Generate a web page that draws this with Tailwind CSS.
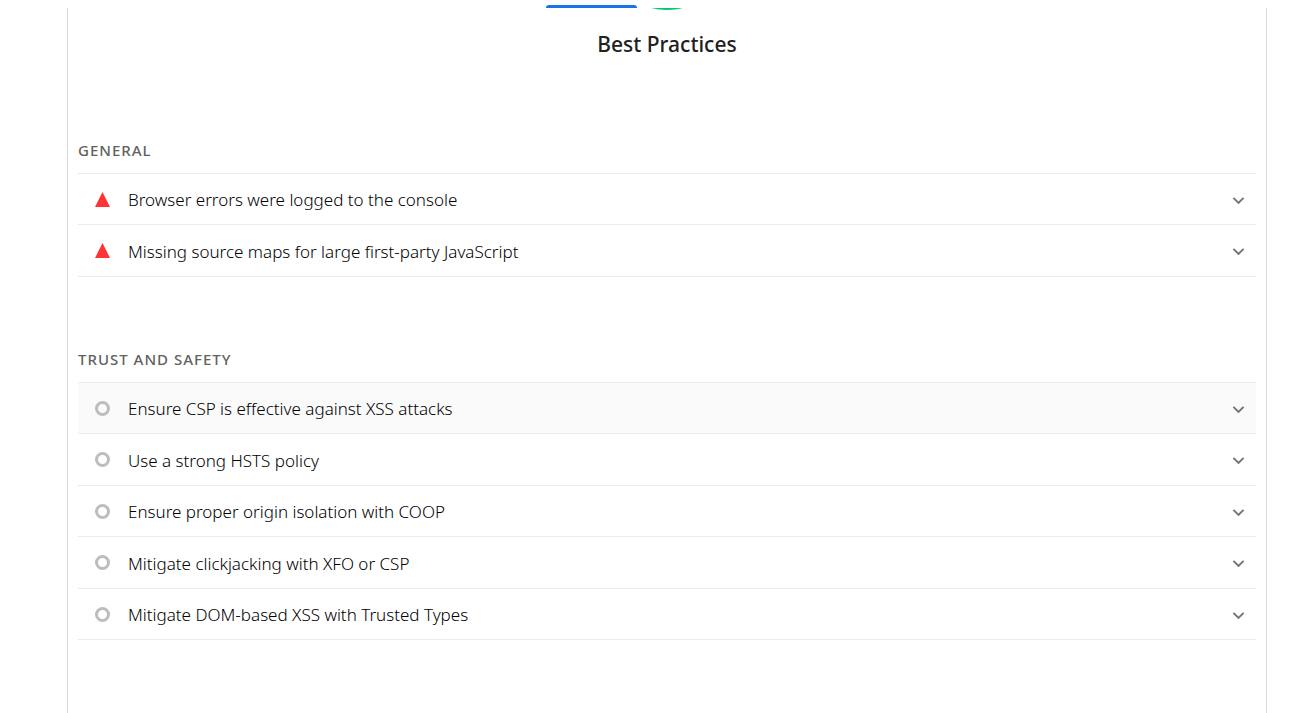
<!DOCTYPE html>
<html lang="en">
<head>
<meta charset="utf-8">
<meta name="viewport" content="width=device-width, initial-scale=1">
<title>Best Practices</title>
<script src="https://cdn.jsdelivr.net/npm/@tailwindcss/browser@4"></script>
</head>
<body class="flex min-h-screen flex-col bg-white font-['Segoe_UI','Noto_Sans',sans-serif] text-[#212121]">
<svg class="hidden" aria-hidden="true">
  <symbol id="fail" viewBox="0 0 15 15"><path d="M7.5 0 15 15H0z" fill="#f33"/></symbol>
  <symbol id="info" viewBox="0 0 15 15"><circle cx="7.5" cy="7.5" r="6" fill="none" stroke="#bdbdbd" stroke-width="3"/></symbol>
  <symbol id="chevron" viewBox="0 0 24 24"><path d="M16.59 8.59 12 13.17 7.41 8.59 6 10l6 6 6-6z" fill="#757575"/></symbol>
</svg>
<header class="flex h-2 items-end justify-center pr-[113px]">
  <div class="h-[3px] w-[91px] rounded-t-[3px] bg-[#1a73e8]"></div>
</header>
<main class="mr-[29px] ml-[67px] flex-1 border-x border-[#dadada] px-[10px]">
  <svg class="mx-auto block h-[2px] w-8" viewBox="0 0 32 2" aria-hidden="true"><path d="M0 0h32Q16 4 0 0z" fill="#0c6"/></svg>
  <h1 class="mt-[18px] text-center text-[21px] leading-8 font-medium">Best Practices</h1>

  <section class="mt-20">
    <h2 class="pb-[13px] text-[15px] leading-5 font-medium tracking-[1px] text-[#616161] uppercase">General</h2>
    <ul class="border-t border-[#ebebeb] text-[17px] leading-6 font-light text-black">
      <li class="group"><details><summary class="flex min-h-[51px] cursor-pointer list-none items-center border-b border-[#ebebeb] pr-[6px] pl-[17px] group-even:min-h-[52px]"><svg class="mr-[18px] size-[15px]"><use href="#fail"/></svg><span class="flex-1 pt-0.5">Browser errors were logged to the console</span><svg class="mt-0.5 size-[23px]"><use href="#chevron"/></svg></summary></details></li>
      <li class="group"><details><summary class="flex min-h-[51px] cursor-pointer list-none items-center border-b border-[#ebebeb] pr-[6px] pl-[17px] group-even:min-h-[52px]"><svg class="mr-[18px] size-[15px]"><use href="#fail"/></svg><span class="flex-1 pt-0.5">Missing source maps for large first-party JavaScript</span><svg class="mt-0.5 size-[23px]"><use href="#chevron"/></svg></summary></details></li>
    </ul>
  </section>

  <section class="mt-[72px]">
    <h2 class="pb-[13px] text-[15px] leading-5 font-medium tracking-[1px] text-[#616161] uppercase">Trust and Safety</h2>
    <ul class="border-t border-[#ebebeb] text-[17px] leading-6 font-light text-black">
      <li class="group"><details><summary class="flex min-h-[51px] cursor-pointer list-none items-center border-b border-[#ebebeb] bg-[#fafafa] pr-[6px] pl-[17px] group-even:min-h-[52px]"><svg class="mr-[18px] size-[15px]"><use href="#info"/></svg><span class="flex-1 pt-0.5">Ensure CSP is effective against XSS attacks</span><svg class="mt-0.5 size-[23px]"><use href="#chevron"/></svg></summary></details></li>
      <li class="group"><details><summary class="flex min-h-[51px] cursor-pointer list-none items-center border-b border-[#ebebeb] pr-[6px] pl-[17px] group-even:min-h-[52px]"><svg class="mr-[18px] size-[15px]"><use href="#info"/></svg><span class="flex-1 pt-0.5">Use a strong HSTS policy</span><svg class="mt-0.5 size-[23px]"><use href="#chevron"/></svg></summary></details></li>
      <li class="group"><details><summary class="flex min-h-[51px] cursor-pointer list-none items-center border-b border-[#ebebeb] pr-[6px] pl-[17px] group-even:min-h-[52px]"><svg class="mr-[18px] size-[15px]"><use href="#info"/></svg><span class="flex-1 pt-0.5">Ensure proper origin isolation with COOP</span><svg class="mt-0.5 size-[23px]"><use href="#chevron"/></svg></summary></details></li>
      <li class="group"><details><summary class="flex min-h-[51px] cursor-pointer list-none items-center border-b border-[#ebebeb] pr-[6px] pl-[17px] group-even:min-h-[52px]"><svg class="mr-[18px] size-[15px]"><use href="#info"/></svg><span class="flex-1 pt-0.5">Mitigate clickjacking with XFO or CSP</span><svg class="mt-0.5 size-[23px]"><use href="#chevron"/></svg></summary></details></li>
      <li class="group"><details><summary class="flex min-h-[51px] cursor-pointer list-none items-center border-b border-[#ebebeb] pr-[6px] pl-[17px] group-even:min-h-[52px]"><svg class="mr-[18px] size-[15px]"><use href="#info"/></svg><span class="flex-1 pt-0.5">Mitigate DOM-based XSS with Trusted Types</span><svg class="mt-0.5 size-[23px]"><use href="#chevron"/></svg></summary></details></li>
    </ul>
  </section>
</main>
</body>
</html>
